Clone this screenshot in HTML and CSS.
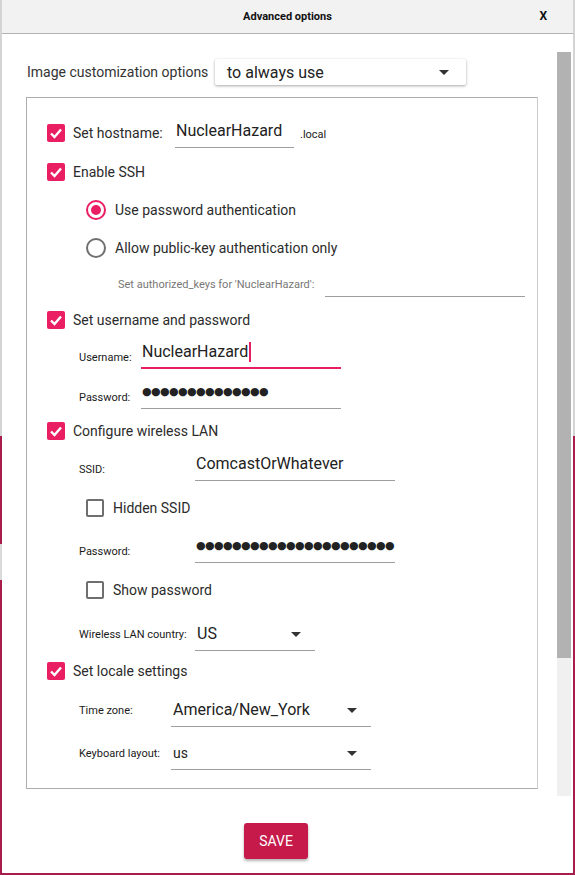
FILE: index.html
```html
<!DOCTYPE html>
<html>
<head>
<meta charset="utf-8">
<link rel="stylesheet" href="styles.css">
</head>
<body>
<div class="dialog">
  <header class="titlebar">
    <span class="title">Advanced options</span>
    <span class="close">X</span>
  </header>
  <div class="main">
    <div class="content">
      <div class="top-row">
        <span class="top-label">Image customization options</span>
        <div class="combo"><span>to always use</span><span class="arrow"></span></div>
      </div>
      <div class="group">
        <div class="row host-row">
          <span class="cb on"><svg viewBox="0 0 18 18"><polyline points="4,9.5 7.5,13 14,5.5"/></svg></span>
          <span class="cb-label w-host">Set hostname:</span>
          <div class="field w-119"><span class="val">NuclearHazard</span></div>
          <span class="suffix">.local</span>
        </div>
        <div class="row check-row mt-5">
          <span class="cb on"><svg viewBox="0 0 18 18"><polyline points="4,9.5 7.5,13 14,5.5"/></svg></span>
          <span class="cb-label">Enable SSH</span>
        </div>
        <div class="row check-row indent-radio">
          <span class="radio on"><span class="dot"></span></span>
          <span class="radio-label">Use password authentication</span>
        </div>
        <div class="row check-row indent-radio">
          <span class="radio"></span>
          <span class="radio-label">Allow public-key authentication only</span>
        </div>
        <div class="row field-row indent-keys">
          <span class="small-label muted w-keys">Set authorized_keys for 'NuclearHazard':</span>
          <div class="field w-200"></div>
        </div>
        <div class="row check-row mt-4">
          <span class="cb on"><svg viewBox="0 0 18 18"><polyline points="4,9.5 7.5,13 14,5.5"/></svg></span>
          <span class="cb-label">Set username and password</span>
        </div>
        <div class="row field-row indent-label">
          <span class="small-label w-62">Username:</span>
          <div class="field focused w-200"><span class="val">NuclearHazard</span><span class="caret"></span></div>
        </div>
        <div class="row field-row indent-label mt-10">
          <span class="small-label w-62">Password:</span>
          <div class="field w-200"><span class="dots">●●●●●●●●●●●●●●</span></div>
        </div>
        <div class="row check-row mt-3">
          <span class="cb on"><svg viewBox="0 0 18 18"><polyline points="4,9.5 7.5,13 14,5.5"/></svg></span>
          <span class="cb-label">Configure wireless LAN</span>
        </div>
        <div class="row field-row indent-label mt-1">
          <span class="small-label w-116">SSID:</span>
          <div class="field w-200"><span class="val">ComcastOrWhatever</span></div>
        </div>
        <div class="row check-row indent-radio mt-8">
          <span class="cb"></span>
          <span class="radio-label">Hidden SSID</span>
        </div>
        <div class="row field-row indent-label mt-6">
          <span class="small-label w-116">Password:</span>
          <div class="field w-200"><span class="dots">●●●●●●●●●●●●●●●●●●●●●●</span></div>
        </div>
        <div class="row check-row indent-radio mt-8">
          <span class="cb"></span>
          <span class="radio-label">Show password</span>
        </div>
        <div class="row field-row indent-label mt-12">
          <span class="small-label sel-label w-116">Wireless LAN country:</span>
          <div class="field select w-120"><span class="val">US</span><span class="arrow"></span></div>
        </div>
        <div class="row check-row mt-1">
          <span class="cb on"><svg viewBox="0 0 18 18"><polyline points="4,9.5 7.5,13 14,5.5"/></svg></span>
          <span class="cb-label">Set locale settings</span>
        </div>
        <div class="row field-row indent-label mt-7">
          <span class="small-label sel-label w-92">Time zone:</span>
          <div class="field select w-200"><span class="val">America/New_York</span><span class="arrow"></span></div>
        </div>
        <div class="row field-row indent-label mt-13">
          <span class="small-label sel-label w-92">Keyboard layout:</span>
          <div class="field select w-200"><span class="val small-val">us</span><span class="arrow"></span></div>
        </div>
      </div>
      <div class="actions">
        <button class="save">SAVE</button>
      </div>
    </div>
    <div class="scrollbar"><div class="thumb"></div></div>
  </div>
</div>
</body>
</html>
```
FILE: styles.css
```css
html, body {
  margin: 0;
  padding: 0;
}
body {
  width: 575px;
  height: 875px;
  overflow: hidden;
  font-family: Roboto, "Liberation Sans", sans-serif;
  color: #2b2b2b;
  background:
    linear-gradient(to bottom, #d4d4d4 0, #d4d4d4 436px, #a81d4b 436px, #a81d4b 544px, #dadada 544px, #dadada 580px, #a81d4b 580px) left top / 2px 100% no-repeat,
    linear-gradient(to bottom, #d4d4d4 0, #d4d4d4 436px, #a81d4b 436px) right top / 2px 100% no-repeat,
    #a81d4b;
}
.dialog {
  margin: 0 2px 2px 2px;
  width: 571px;
  height: 873px;
  background: #fff;
  display: flex;
  flex-direction: column;
}
.titlebar {
  height: 33px;
  flex: 0 0 33px;
  background: #f2f2f2;
  border-bottom: 1px solid #b3b3b3;
  display: flex;
  align-items: center;
  justify-content: center;
  position: relative;
}
.title {
  font-weight: 700;
  font-size: 11px;
  color: #111;
}
.close {
  position: absolute;
  right: 26px;
  top: 9px;
  font-weight: 700;
  font-size: 12px;
  color: #111;
}
.main {
  flex: 1;
  display: flex;
}
.content {
  flex: 1;
  padding-left: 24px;
}
.scrollbar {
  width: 14px;
  height: 744px;
  margin-top: 18px;
  margin-right: 2px;
  margin-left: 1px;
  background: #f0f0f0;
}
.thumb {
  height: 606px;
  background: #b2b2b2;
}
.top-row {
  display: flex;
  align-items: center;
  margin-top: 25px;
  height: 26px;
}
.top-label {
  width: 188px;
  padding-left: 1px;
  font-size: 14px;
  color: #333;
}
.combo {
  width: 251px;
  height: 26px;
  box-sizing: border-box;
  background: #fff;
  border-radius: 2px;
  box-shadow: 0 1px 3px rgba(0,0,0,0.35);
  display: flex;
  align-items: center;
  justify-content: space-between;
  padding: 0 17px 0 12px;
  font-size: 16px;
  color: #222;
}
.arrow {
  width: 0;
  height: 0;
  border-left: 5px solid transparent;
  border-right: 5px solid transparent;
  border-top: 5px solid #333;
}
.group {
  margin-top: 12px;
  width: 512px;
  box-sizing: border-box;
  border: 1px solid #acacac;
  border-right-color: #cdcdcd;
  padding: 20px 0 18px 20px;
}
.row {
  display: flex;
  align-items: center;
}
.host-row {
  height: 30px;
}
.check-row {
  height: 38px;
}
.field-row {
  height: 30px;
  align-items: flex-start;
}
.indent-radio { padding-left: 39px; }
.indent-keys { padding-left: 71px; }
.indent-label { padding-left: 32px; }
.mt-1 { margin-top: 1px; }
.mt-3 { margin-top: 3px; }
.mt-4 { margin-top: 4px; }
.mt-5 { margin-top: 5px; }
.mt-6 { margin-top: 6px; }
.mt-7 { margin-top: 7px; }
.mt-8 { margin-top: 8px; }
.mt-10 { margin-top: 10px; }
.mt-12 { margin-top: 12px; }
.mt-13 { margin-top: 13px; }

.cb {
  width: 18px;
  height: 18px;
  box-sizing: border-box;
  border: 2px solid #6f6f6f;
  border-radius: 2px;
  flex: 0 0 18px;
  display: flex;
}
.cb.on {
  background: #e91e63;
  border: none;
}
.cb svg {
  width: 18px;
  height: 18px;
}
.cb polyline {
  fill: none;
  stroke: #fff;
  stroke-width: 2.4;
}
.cb-label {
  margin-left: 8px;
  font-size: 14px;
  color: #2b2b2b;
}
.w-host { width: 102px; margin-left: 8px; }
.radio {
  width: 20px;
  height: 20px;
  box-sizing: border-box;
  border: 2px solid #6f6f6f;
  border-radius: 50%;
  flex: 0 0 20px;
  display: flex;
  align-items: center;
  justify-content: center;
}
.radio.on {
  border-color: #e91e63;
}
.radio .dot {
  width: 10px;
  height: 10px;
  border-radius: 50%;
  background: #e91e63;
}
.radio-label {
  margin-left: 9px;
  font-size: 14px;
  color: #2b2b2b;
}

.field {
  height: 30px;
  box-sizing: border-box;
  border-bottom: 1px solid #9e9e9e;
  display: flex;
  align-items: flex-start;
  padding: 3px 0 0 1px;
  font-size: 16px;
  color: #222;
  line-height: 20px;
}
.field.focused {
  border-bottom: 2px solid #e91e63;
}
.caret {
  width: 2px;
  height: 20px;
  margin-left: 1px;
  background: #e91e63;
}
.field.select {
  justify-content: space-between;
  padding-left: 2px;
  padding-right: 14px;
}
.field.select .arrow {
  margin-top: 8px;
}
.small-val { font-size: 14px; }
.dots {
  font-family: "DejaVu Sans", sans-serif;
  font-size: 11px;
  letter-spacing: -0.6px;
  color: #222;
  line-height: 20px;
}
.w-119 { width: 119px; }
.w-120 { width: 120px; }
.w-200 { width: 200px; }
.suffix {
  margin-left: 6px;
  margin-top: 3px;
  font-size: 11px;
  color: #222;
}
.small-label {
  font-size: 11px;
  color: #1a1a1a;
  margin-top: 12px;
  line-height: 13px;
}
.small-label.sel-label {
  margin-top: 7px;
}
.muted { color: #777; margin-top: 11px; }
.w-keys { width: 207px; }
.w-62 { width: 62px; }
.w-92 { width: 92px; }
.w-116 { width: 116px; }

.actions {
  width: 500px;
  display: flex;
  justify-content: center;
  margin-top: 34px;
}
.save {
  width: 64px;
  height: 36px;
  border: none;
  border-radius: 3px;
  background: #c51a4a;
  color: #fff;
  font-family: Roboto, "Liberation Sans", sans-serif;
  font-size: 14px;
  box-shadow: 0 2px 3px rgba(0,0,0,0.3);
}
```
